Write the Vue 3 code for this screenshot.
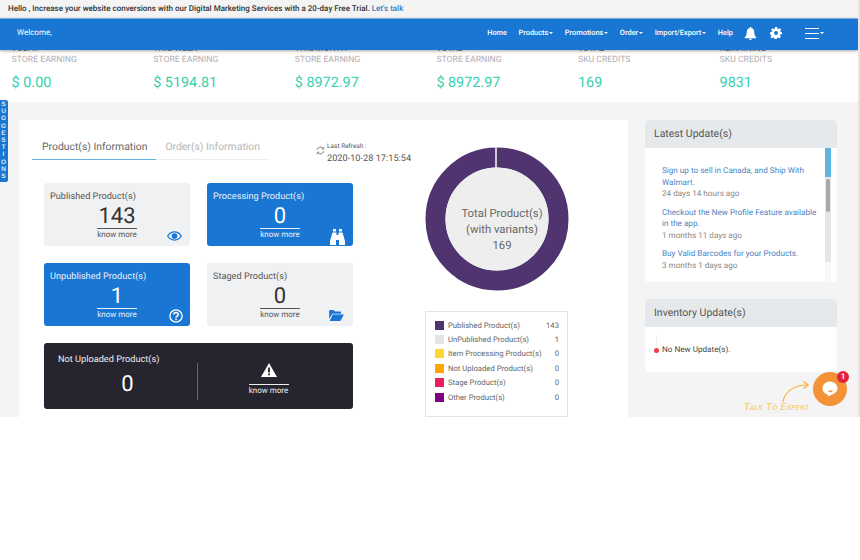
<script setup>
const stats = [
  { top: 'TODAY', label: 'STORE EARNING', value: '$ 0.00' },
  { top: 'THIS WEEK', label: 'STORE EARNING', value: '$ 5194.81' },
  { top: 'THIS MONTH', label: 'STORE EARNING', value: '$ 8972.97' },
  { top: 'TOTAL', label: 'STORE EARNING', value: '$ 8972.97' },
  { top: 'TOTAL', label: 'SKU CREDITS', value: '169' },
  { top: 'REMAINING', label: 'SKU CREDITS', value: '9831' }
]
const legend = [
  { name: 'Published Product(s)', n: 143, c: '#4f3470' },
  { name: 'UnPublished Product(s)', n: 1, c: '#e3e6e8' },
  { name: 'Item Processing Product(s)', n: 0, c: '#fdd835' },
  { name: 'Not Uploaded Product(s)', n: 0, c: '#ffa500' },
  { name: 'Stage Product(s)', n: 0, c: '#e91e5b' },
  { name: 'Other Product(s)', n: 0, c: '#800080' }
]
const updates = [
  { t: 'Sign up to sell in Canada, and Ship With Walmart.', a: '24 days 14 hours ago' },
  { t: 'Checkout the New Profile Feature available in the app.', a: '1 months 11 days ago' },
  { t: 'Buy Valid Barcodes for your Products.', a: '3 months 1 days ago' }
]
</script>

<template>
  <div class="page">
    <div class="viewport">
      <div class="promo">Hello , Increase your website conversions with our Digital Marketing Services with a 20-day Free Trial. <a>Let's talk</a></div>
      <div class="stats">
        <div v-for="s in stats" :key="s.top + s.label" class="stat">
          <div class="stat-top">{{ s.top }}</div>
          <div class="stat-label">{{ s.label }}</div>
          <div class="stat-value">{{ s.value }}</div>
        </div>
      </div>
      <header class="nav">
        <span class="welcome">Welcome,</span>
        <nav class="menu">
          <span>Home</span>
          <span>Products<i class="caret"></i></span>
          <span>Promotions<i class="caret"></i></span>
          <span>Order<i class="caret"></i></span>
          <span>Import/Export<i class="caret"></i></span>
          <span>Help</span>
        </nav>
        <svg class="bell" viewBox="0 0 14 14" width="13" height="13"><path fill="#fff" d="M7 0a1 1 0 0 1 1 1.2c2 .5 3 2.2 3 4.3 0 3 1 4.500 2.200 5.800v.7H.8v-.7C2 10 3 8.500 3 5.500c0-2.100 1-3.800 3-4.300A1 1 0 0 1 7 0zM5.400 12.700h3.200A1.700 1.700 0 0 1 7 14a1.700 1.700 0 0 1-1.600-1.300z"/></svg>
        <svg class="gear" viewBox="0 0 24 24" width="12" height="12"><path fill="#fff" fill-rule="evenodd" d="M10 0h4l.6 3.200 2.300 1 2.700-1.900 2.800 2.800-1.900 2.700 1 2.300L24 10.700v3.600l-3.200.6-1 2.300 1.900 2.700-2.800 2.800-2.700-1.900-2.300 1-.6 3.200h-4l-.6-3.200-2.300-1-2.700 1.900-2.800-2.800 1.900-2.700-1-2.300L0 14.300v-3.600l3.200-.6 1-2.300-1.900-2.700 2.800-2.800 2.700 1.900 2.300-1zM12 8a4 4 0 1 0 0 8 4 4 0 0 0 0-8z"/></svg>
        <span class="burger"><i></i><i></i><i></i></span><i class="caret burger-caret"></i>
      </header>
      <aside class="suggest"><span>SUGGESTIONS</span></aside>

      <main class="body">
        <section class="card main-card">
          <div class="left">
            <div class="tabs">
              <span class="tab active">Product(s) Information</span>
              <span class="tab">Order(s) Information</span>
              <div class="refresh">
                <svg viewBox="0 0 16 16" width="9" height="9"><path fill="none" stroke="#9a9a9a" stroke-width="2" d="M2 7a6 6 0 0 1 11-2M14 9a6 6 0 0 1-11 2"/><path fill="#9a9a9a" d="M14.500 1v5h-5zM1.500 15v-5h5z"/></svg>
                <div><small>Last Refresh :</small><b>2020-10-28 17:15:54</b></div>
              </div>
            </div>
            <div class="tiles">
              <div class="tile grey">
                <div class="tile-title">Published Product(s)</div>
                <div class="num">143</div><div class="more">know more</div>
                <svg class="ic eye" viewBox="0 0 24 16" width="15" height="10"><path fill="none" stroke="#1976d2" stroke-width="2" d="M1 8c3-4.500 7-6.500 11-6.500S20 3.500 23 8c-3 4.500-7 6.500-11 6.500S4 12.500 1 8z"/><circle cx="12" cy="8" r="4.500" fill="#1976d2"/></svg>
              </div>
              <div class="tile blue">
                <div class="tile-title">Processing Product(s)</div>
                <div class="num">0</div><div class="more">know more</div>
                <svg class="ic bino" viewBox="0 0 15 16" width="15" height="16"><path fill="#fff" d="M3 0h3v2.500H3zM9 0h3v2.500H9zM2.500 3.500H6.500V6h2V3.500h4L15 12v4H9v-5H6v5H0v-4z"/></svg>
              </div>
              <div class="tile blue">
                <div class="tile-title">Unpublished Product(s)</div>
                <div class="num">1</div><div class="more">know more</div>
                <svg class="ic qm" viewBox="0 0 16 16" width="14" height="14"><circle cx="8" cy="8" r="7" fill="none" stroke="#fff" stroke-width="1.500"/><path fill="none" stroke="#fff" stroke-width="1.800" d="M5.500 6.200a2.500 2.300 0 1 1 3.800 2c-.9.500-1.300 1-1.300 1.800"/><rect x="7.100" y="11" width="1.800" height="1.800" fill="#fff"/></svg>
              </div>
              <div class="tile grey">
                <div class="tile-title">Staged Product(s)</div>
                <div class="num">0</div><div class="more">know more</div>
                <svg class="ic folder" viewBox="0 0 16 12" width="15" height="11"><path fill="#1976d2" d="M0 1.200C0 .5.500 0 1.200 0h3.600l1.500 1.500h5.500c.7 0 1.200.5 1.200 1.200V4H3.500L0 9.500zM3.800 5H16l-3.200 6.200c-.2.500-.6.800-1.200.8H.6z"/></svg>
              </div>
              <div class="tile dark">
                <div class="dark-left">
                  <div class="tile-title">Not Uploaded Product(s)</div>
                  <div class="num">0</div>
                </div>
                <div class="dark-right">
                  <svg viewBox="0 0 16 14" width="16" height="14"><path fill="#fff" d="M8 0l8 14H0z"/><rect x="7.100" y="4.500" width="1.800" height="5" fill="#26252f"/><rect x="7.100" y="10.500" width="1.800" height="1.800" fill="#26252f"/></svg>
                  <div class="more">know more</div>
                </div>
              </div>
            </div>
          </div>
          <div class="chart">
            <svg class="donut" viewBox="0 0 144 144" width="144" height="144">
              <circle cx="72" cy="72" r="61.500" fill="none" stroke="#4f3470" stroke-width="20"/>
              <rect x="70.200" y="0" width="1.600" height="21" fill="#eeeeee"/>
              <circle cx="72" cy="72" r="51.500" fill="#eeeeee"/>
            </svg>
            <div class="donut-text">Total Product(s)<br>(with variants)<br>169</div>
            <div class="legend">
              <div v-for="l in legend" :key="l.name" class="lg-row">
                <i :style="{ background: l.c }"></i>
                <span>{{ l.name }}</span>
                <em>{{ l.n }}</em>
              </div>
            </div>
          </div>
        </section>

        <div class="side">
          <section class="panel latest">
            <h3>Latest Update(s)</h3>
            <div class="list">
              <div class="items">
                <div v-for="u in updates" :key="u.t" class="upd">
                  <a>{{ u.t }}</a>
                  <span>{{ u.a }}</span>
                </div>
              </div>
              <div class="bar"><div class="track"><i class="bar-top"></i><i class="bar-thumb"></i></div></div>
            </div>
          </section>
          <section class="panel inv">
            <h3>Inventory Update(s)</h3>
            <div class="inv-body"><i class="line"></i><i class="dot"></i>No New Update(s).</div>
          </section>
        </div>
      </main>

      <div class="chat">
        <svg viewBox="0 0 16 16" width="16" height="16"><path fill="#fff" d="M8 .5C3.800.5.500 3.500.500 7.300c0 3.300 2.500 6 5.800 6.600.1.700 0 1.300-.4 1.900 1.300-.3 2.400-1 3.200-2 3.200-.6 6.400-3.100 6.400-6.500C15.500 3.500 12.200.5 8 .5z"/><path fill="#f39237" d="M6 9.500h5c-.3 1.200-1.300 1.800-2.500 1.800S6.300 10.700 6 9.500z"/></svg>
        <b>1</b>
      </div>
      <svg class="arrow" viewBox="0 0 30 26" width="30" height="26"><path fill="none" stroke="#fbb03b" stroke-width="1.200" d="M3 24C4 15 13 7 27 7"/><path fill="none" stroke="#fbb03b" stroke-width="1.500" d="M23.500 3.500L28 7l-4.500 3.500"/></svg>
      <span class="talk">Talk To Expert</span>
    </div>
  </div>
</template>

<style>
html, body { margin: 0; background: #fff; }
</style>
<style scoped>
.page { width: 860px; height: 560px; overflow: hidden; font-family: Roboto, "Liberation Sans", sans-serif; background: #fff; text-rendering: geometricPrecision; }
.viewport { position: relative; height: 417px; background: #f4f4f4; overflow: hidden; border-right: 2px solid #e6e6e6; box-sizing: border-box; width: 860px; }
.promo { height: 18px; line-height: 18px; padding-left: 8px; font-size: 8px; font-weight: 500; color: #333; background: #f4f4f4; white-space: nowrap; }
.promo a { color: #3e7cb8; }
.nav { position: absolute; top: 18px; left: 0; right: 0; height: 31.500px; background: #1976d2; border-top: 1px solid #78aee0; box-sizing: border-box; box-shadow: 0 1px 3px rgba(0,0,0,.35); display: flex; align-items: center; color: #fff; font-size: 7.400px; font-weight: 500; }
.welcome { margin-left: 17px; font-weight: 400; font-size: 8px; margin-top: -3px; }
.menu { margin-left: auto; display: flex; gap: 11.500px; margin-top: -3px; }
.caret { display: inline-block; margin-left: 1px; vertical-align: middle; border-left: 2.500px solid transparent; border-right: 2.500px solid transparent; border-top: 2.500px solid #fff; }
.bell { margin-left: 11px; margin-top: -1px; }
.gear { margin-left: 13px; margin-top: -2px; }
.burger { margin-left: 23px; display: flex; flex-direction: column; gap: 3.500px; margin-top: -2px; }
.burger i { display: block; width: 14px; height: 1.500px; background: #fff; }
.burger-caret { margin-left: 1px; margin-right: 34px; margin-top: -2px; }
.stats { height: 84px; background: #fff; display: flex; padding-left: 11.600px; position: relative; }
.stat { width: 141.600px; flex: none; font-size: 8.700px; color: #b0aeb6; }
.stat-top { color: #666; margin-top: 24px; line-height: 14px; }
.stat-label { line-height: 11px; margin-top: -1px; }
.stat-value { font-size: 14.400px; color: #34d1ae; margin-top: 6.500px; line-height: 19px; }
.suggest { position: absolute; left: 0; top: 100px; width: 8px; height: 82px; background: #1976d2; border-radius: 0 2px 2px 0; color: #dfe9f5; font-size: 6.500px; font-weight: 700; font-family: "Liberation Sans", sans-serif; line-height: 7.200px; text-align: center; overflow: hidden; }
.suggest span { display: block; width: 5px; margin: 1px 0 0 1px; word-break: break-all; white-space: normal; }
.body { display: flex; align-items: flex-start; padding: 18px 0 0 19px; gap: 17px; }
.card { background: #fff; }
.main-card { width: 609px; height: 300px; flex: none; border-radius: 3px; display: flex; box-sizing: border-box; padding: 11px 0 0 13px; }
.left { width: 377px; flex: none; }
.tabs { display: flex; position: relative; height: 33px; align-items: flex-start; }
.tab { font-size: 10.400px; color: #b5b5b5; padding: 8px 9px 0; height: 29px; line-height: 15px; box-sizing: border-box; border-bottom: 1px solid #eee; white-space: nowrap; }
.tab.active { color: #666; border-bottom-color: #62b3de; padding-left: 10px; }
.refresh { position: absolute; left: 284px; top: 11px; display: flex; gap: 2px; align-items: flex-start; }
.refresh svg { margin-top: 4px; }
.refresh small { display: block; font-size: 6.500px; color: #555; line-height: 9px; }
.refresh b { display: block; font-weight: 400; font-size: 9.200px; color: #555; margin-top: 2px; line-height: 12px; white-space: nowrap; }
.tiles { display: grid; grid-template-columns: 146px 146px; gap: 17px; margin: 19px 0 0 12px; width: 309px; }
.tile { position: relative; height: 63px; border-radius: 3px; box-sizing: border-box; padding: 8px 6px 0; text-align: center; }
.tile-title { text-align: left; font-size: 9.200px; line-height: 12px; white-space: nowrap; }
.num { font-size: 22px; line-height: 23px; margin-top: 2px; }
.more { width: 40px; margin: 0 auto; font-size: 8px; line-height: 12px; border-top: 1px solid currentColor; white-space: nowrap; }
.grey { background: #f0f1f3; color: #555; }
.grey .num { color: #333; }
.blue { background: #1976d2; color: #e8f1fb; }
.blue .num { color: #fff; }
.ic { position: absolute; }
.eye { right: 8px; bottom: 5px; }
.bino { right: 8px; bottom: 1px; }
.qm { right: 7px; bottom: 3px; }
.folder { right: 9px; bottom: 5px; }
.dark { grid-column: 1 / 3; height: 66px; background: #26252f; color: #eee; display: flex; padding: 0; }
.dark-left { width: 154px; height: 37px; margin-top: 20px; padding-left: 14px; box-sizing: border-box; border-right: 1px solid #666; }
.dark-left .tile-title { margin-top: -9px; }
.dark-left .num { color: #fff; margin-top: 7px; }
.dark-right { flex: 1; padding: 20px 14px 0 0; text-align: center; }
.dark-right svg { display: block; margin: 0 auto 7px; }
.chart { position: relative; width: 144px; flex: none; margin-left: 16px; padding-top: 16px; }
.donut { display: block; }
.donut-text { position: absolute; left: 10px; right: 0; top: 75px; text-align: center; font-size: 11.300px; line-height: 16px; color: #666; white-space: nowrap; }
.legend { width: 143px; height: 106px; box-sizing: border-box; border: 1px solid #e2e2e2; margin-top: 20px; padding: 6px 8px 0 9px; background: #fff; }
.lg-row { display: flex; align-items: center; height: 14.400px; font-size: 7.700px; color: #666; white-space: nowrap; }
.lg-row i { width: 9px; height: 9px; flex: none; margin-right: 4px; }
.lg-row em { margin-left: auto; font-style: normal; }
.side { width: 192px; flex: none; }
.panel { background: #fff; border-radius: 4px; overflow: hidden; }
.panel h3 { margin: 0; height: 28px; line-height: 28px; background: #e5e9ec; color: #555; font-weight: 400; font-size: 10.500px; padding-left: 9px; }
.latest { height: 162px; margin-bottom: 17px; }
.list { display: flex; height: 134px; }
.items { width: 180px; padding: 17px 7px 0 17px; box-sizing: border-box; }
.upd { margin-bottom: 7px; font-size: 8.150px; line-height: 11.500px; }
.upd a { display: block; color: #4c7fbf; }
.upd span { display: block; color: #888; }
.bar { width: 6px; height: 134px; background: #f8f8f8; }
.track { height: 114px; background: #e6e6e6; }
.track i { display: block; width: 6px; }
.bar-top { height: 29px; background: #5db5de; }
.bar-thumb { height: 33px; margin: 2px auto 0; width: 4px !important; background: #a9a9a9; border-radius: 2px; }
.inv { height: 73px; }
.inv-body { padding-left: 17px; margin-top: 14px; height: 16px; line-height: 16px; font-size: 8.150px; color: #444; position: relative; }
.dot { position: absolute; left: 9px; top: 7px; width: 5px; height: 5px; border-radius: 50%; background: #ee3e4a; }
.line { position: absolute; left: 11px; top: -6px; width: 1px; height: 13px; background: #eee; }
.chat { position: absolute; left: 813px; top: 372px; width: 34px; height: 34px; border-radius: 50%; background: #f39237; display: flex; align-items: center; justify-content: center; }
.chat b { position: absolute; right: -2px; top: -1px; width: 12px; height: 12px; line-height: 12px; border-radius: 50%; background: #e5203a; color: #fff; text-align: center; font-size: 8px; }
.arrow { position: absolute; left: 780px; top: 378px; }
.talk { position: absolute; left: 744px; top: 402px; font-family: "DejaVu Sans", sans-serif; font-size: 9.500px; font-style: italic; color: #f8c765; font-variant: small-caps; white-space: nowrap; }
</style>
